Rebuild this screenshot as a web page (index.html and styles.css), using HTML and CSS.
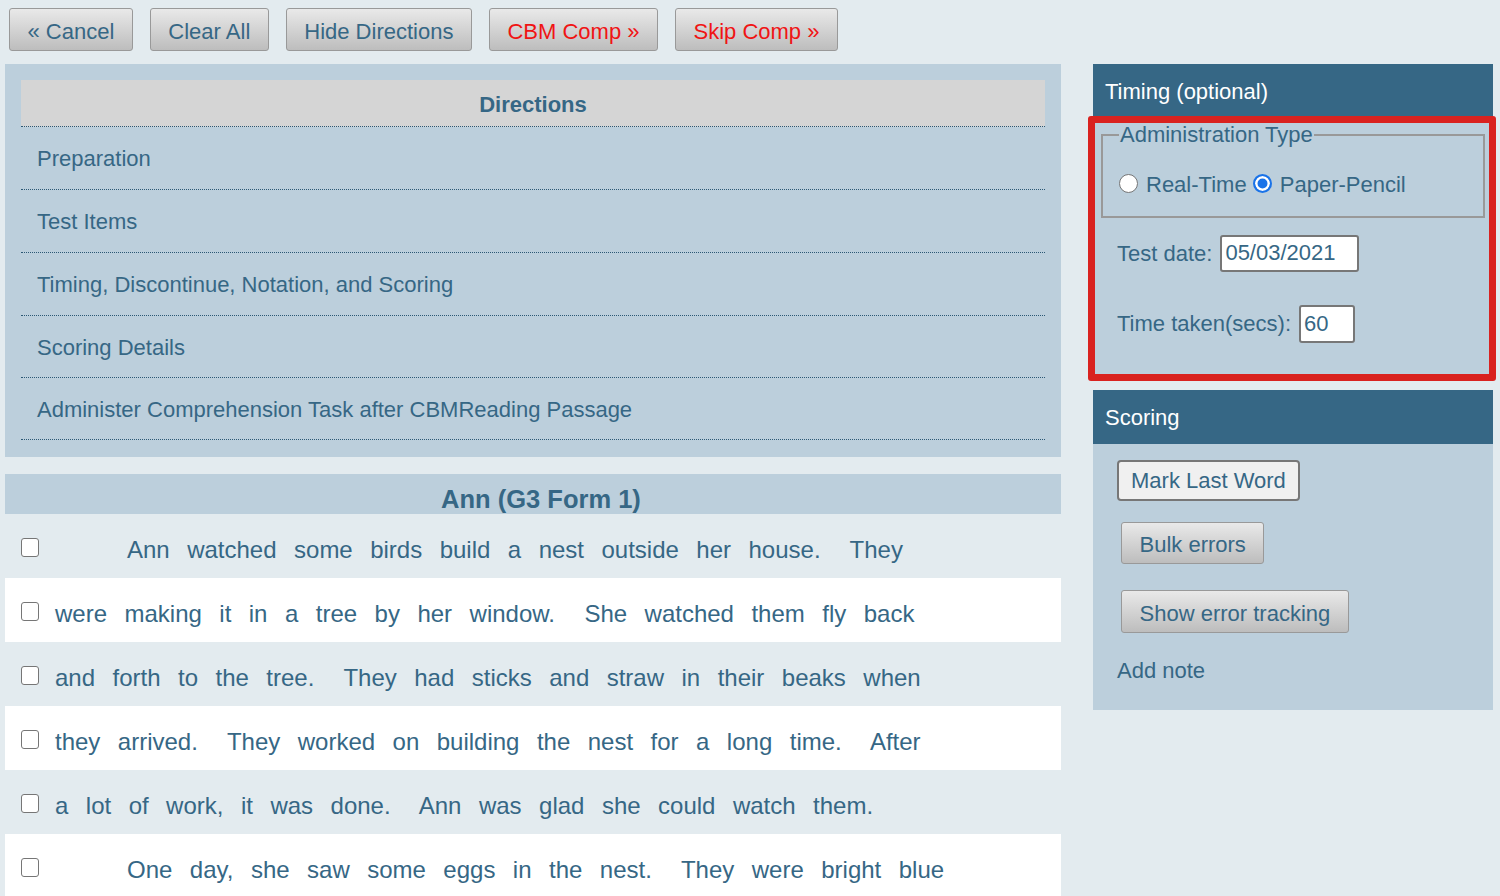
FILE: index.html
```html
<!DOCTYPE html>
<html lang="en">
<head>
	<meta charset="UTF-8">
	<title>CBM Reading - Ann (G3 Form 1)</title>
	<link rel="stylesheet" href="styles.css">
</head>
<body>
	<div class="toolbar">
		<button class="btn">&laquo; Cancel</button>
		<button class="btn">Clear All</button>
		<button class="btn">Hide Directions</button>
		<button class="btn btnRed">CBM Comp &raquo;</button>
		<button class="btn btnRed">Skip Comp &raquo;</button>
	</div>

	<div class="main">
		<div class="leftCol">
			<div class="directions">
				<div class="dirTitle">Directions</div>
				<div class="dirItem">Preparation</div>
				<div class="dirItem">Test Items</div>
				<div class="dirItem">Timing, Discontinue, Notation, and Scoring</div>
				<div class="dirItem">Scoring Details</div>
				<div class="dirItem">Administer Comprehension Task after CBMReading Passage</div>
			</div>

			<div class="passage">
				<div class="passageTitle">Ann (G3 Form 1)</div>
				<div class="line">
					<input type="checkbox" class="chk">
					<span class="words indent">Ann watched some birds build a nest outside her house.<span class="sp"></span> They</span>
				</div>
				<div class="line white">
					<input type="checkbox" class="chk">
					<span class="words">were making it in a tree by her window.<span class="sp"></span> She watched them fly back</span>
				</div>
				<div class="line">
					<input type="checkbox" class="chk">
					<span class="words">and forth to the tree.<span class="sp"></span> They had sticks and straw in their beaks when</span>
				</div>
				<div class="line white">
					<input type="checkbox" class="chk">
					<span class="words">they arrived.<span class="sp"></span> They worked on building the nest for a long time.<span class="sp"></span> After</span>
				</div>
				<div class="line">
					<input type="checkbox" class="chk">
					<span class="words">a lot of work, it was done.<span class="sp"></span> Ann was glad she could watch them.</span>
				</div>
				<div class="line white">
					<input type="checkbox" class="chk">
					<span class="words indent">One day, she saw some eggs in the nest.<span class="sp"></span> They were bright blue</span>
				</div>
			</div>
		</div>

		<div class="rightCol">
			<div class="box timingBox">
				<div class="boxTitle">Timing (optional)</div>
				<div class="boxBody timingBody">
					<fieldset class="adminType">
						<legend>Administration Type</legend>
						<label class="radioLabel"><input type="radio" name="adm" class="radio"> Real-Time</label>
						<label class="radioLabel"><input type="radio" name="adm" class="radio" checked> Paper-Pencil</label>
					</fieldset>
					<div class="field">
						<span>Test date:</span>
						<input type="text" class="txt dateTxt" value="05/03/2021">
					</div>
					<div class="field">
						<span>Time taken(secs):</span>
						<input type="text" class="txt secsTxt" value="60">
					</div>
				</div>
				<div class="highlight"></div>
			</div>

			<div class="box">
				<div class="boxTitle scoringTitle">Scoring</div>
				<div class="boxBody scoringBody">
					<button class="plainBtn">Mark Last Word</button>
					<button class="btn bulkBtn">Bulk errors</button>
					<button class="btn trackBtn">Show error tracking</button>
					<a class="addNote">Add note</a>
				</div>
			</div>
		</div>
	</div>
</body>
</html>
```

FILE: styles.css
```css
*{
	margin:0;
	padding:0;
	box-sizing: border-box;
}
body{
	background: #e3ebef;
	color: #366785;
	font-family: "Liberation Sans", Arial, sans-serif;
	font-size: 22px;
	padding: 8px 0 0 5px;
}
.toolbar{
	display: flex;
	gap: 17px;
	padding-left: 4px;
}
.btn{
	height: 43px;
	padding: 4px 17.5px 0;
	border: 1px solid #999;
	border-radius: 3px;
	background: linear-gradient(#e9e9e9, #bdbdbd);
	color: #366785;
	font-family: inherit;
	font-size: 22px;
}
.btnRed{
	color: #f01414;
}

.main{
	display: flex;
	gap: 32px;
	margin-top: 13px;
	align-items: flex-start;
}
.leftCol{
	width: 1056px;
}
.rightCol{
	width: 400px;
}

/* directions */
.directions{
	background: #bccfdc;
	padding: 16px 16px 17px;
}
.dirTitle{
	background: #d5d5d5;
	height: 47px;
	line-height: 50px;
	text-align: center;
	font-weight: bold;
	border-bottom: 1px dotted #2b5875;
}
.dirItem{
	height: 63px;
	line-height: 63px;
	padding-left: 16px;
	border-bottom: 1px dotted #2b5875;
}
.dirItem:nth-child(5),
.dirItem:nth-child(6){
	height: 62px;
}

/* passage */
.passage{
	margin-top: 17px;
}
.passageTitle{
	background: #bccfdc;
	height: 40px;
	line-height: 50px;
	text-align: center;
	font-weight: bold;
	font-size: 25.5px;
	padding-left: 16px;
	overflow: hidden;
}
.line{
	display: flex;
	align-items: center;
	height: 64px;
	padding: 7px 0 0 16px;
	font-size: 24px;
}
.white{
	background: #fff;
}
.chk{
	appearance: none;
	width: 18px;
	height: 19px;
	border: 1.5px solid #767676;
	border-radius: 3px;
	background: #fff;
	flex: none;
	margin-right: 16px;
	margin-top: -4px;
}
.words{
	word-spacing: 10.8px;
	white-space: pre;
}
.words.indent{
	padding-left: 72px;
}
.sp{
	display: inline-block;
	width: 12px;
}

/* right side boxes */
.box{
	position: relative;
	background: #bccfdc;
	margin-bottom: 15px;
}
.boxTitle{
	background: #366785;
	color: #fff;
	height: 52px;
	line-height: 55px;
	padding-left: 12px;
}
.scoringTitle{
	height: 54px;
}
.timingBody{
	padding: 8px 8px 12px;
	height: 259px;
}
.adminType{
	border: 2px solid #999;
	padding: 0 16px 14px 16px;
	height: 94px;
}
.adminType legend{
	padding: 0 1px;
	line-height: 22px;
}
.radioLabel{
	display: inline-flex;
	align-items: center;
	margin-top: 26px;
}
.radio{
	appearance: none;
	width: 19px;
	height: 19px;
	border: 1.5px solid #767676;
	border-radius: 50%;
	background: #fff;
	margin-right: 8px;
	margin-top: -3px;
}
.radio:checked{
	border: 2px solid #1a73e8;
	background: #1a73e8;
	box-shadow: inset 0 0 0 2.5px #fff;
}
.field{
	display: flex;
	align-items: center;
	gap: 8px;
	padding-left: 16px;
}
.field:nth-of-type(1){
	margin-top: 17px;
}
.field + .field{
	margin-top: 33px;
}
.txt{
	height: 37px;
	border: 2px solid #777;
	border-radius: 3px;
	background: #fff;
	color: #366785;
	font-family: inherit;
	font-size: 22px;
	padding: 0 3px 1px;
}
.dateTxt{
	width: 139px;
}
.secsTxt{
	width: 56px;
	height: 38px;
}
.highlight{
	position: absolute;
	left: -5px;
	top: 52px;
	width: 408px;
	height: 265px;
	border: 7px solid #d9221f;
	border-radius: 3px;
}

.scoringBody{
	height: 266px;
	padding: 16px 0 0 24px;
	display: flex;
	flex-direction: column;
	align-items: flex-start;
}
.plainBtn{
	height: 41px;
	padding: 0 12px;
	border: 2px solid #777;
	border-radius: 4px;
	background: #f0f0f0;
	color: #366785;
	font-family: inherit;
	font-size: 22px;
}
.bulkBtn{
	height: 42px;
	margin: 21px 0 0 4px;
	border-width: 1.5px;
}
.trackBtn{
	margin: 26px 0 0 4px;
	border-width: 1.5px;
}
.addNote{
	margin-top: 25px;
	line-height: 25px;
}
```
